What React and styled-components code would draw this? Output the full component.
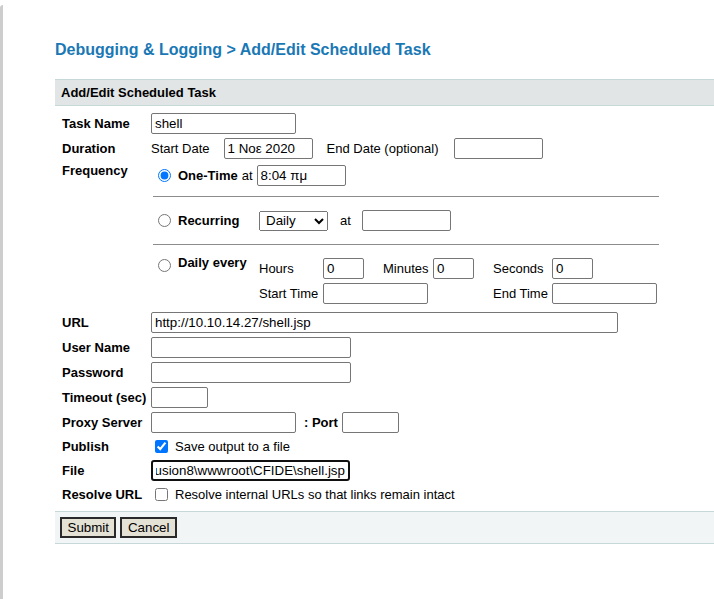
import React, { useEffect, useRef } from 'react';
import styled, { createGlobalStyle } from 'styled-components';

const GlobalStyle = createGlobalStyle`
    html, body {
        margin: 0;
        padding: 0;
        background: #ffffff;
        overflow: hidden;
    }
    body {
        font-family: "Liberation Sans", Arial, sans-serif;
        font-size: 13px;
        color: #000000;
    }
`;

const Frame = styled.div`
    margin-top: 5px;
    min-height: calc(100vh - 5px);
    border-left: 3px solid #cdcdcd;
    border-top-left-radius: 3px;
    padding: 35px 0 0 52px;
    box-sizing: border-box;
`;

const Title = styled.h1`
    margin: 0 0 20px;
    font-size: 16px;
    line-height: 19px;
    font-weight: bold;
    color: #1a78b5;
`;

const Band = styled.div`
    display: flex;
    align-items: center;
    border-top: 1px solid #c6d8d8;
    border-bottom: 1px solid #c6d8d8;
    background: ${({ $footer }) => ($footer ? '#f1f5f5' : '#e1e5e5')};
    padding: ${({ $footer }) => ($footer ? '5px 5px' : '0 6px')};
    height: ${({ $footer }) => ($footer ? '21px' : '25px')};
    font-weight: bold;
    gap: 4px;
`;

const Form = styled.div`
    display: grid;
    grid-template-columns: 89px 1fr;
    row-gap: 4px;
    align-items: center;
    padding: 7px 0 7px 7px;
`;

const Label = styled.div`
    font-weight: bold;
    line-height: 15px;
    align-self: ${({ $top }) => ($top ? 'start' : 'center')};
`;

const Field = styled.div`
    display: flex;
    align-items: center;
    min-height: ${({ $h }) => $h || 21}px;
`;

const Text = styled.span`
    line-height: 15px;
    margin: 0 ${({ $mr }) => $mr || 0}px 0 ${({ $ml }) => $ml || 0}px;
    font-weight: ${({ $bold }) => ($bold ? 'bold' : 'normal')};
    white-space: nowrap;
`;

const TextInput = styled.input`
    box-sizing: border-box;
    width: ${({ $w }) => $w}px;
    height: 21px;
    margin: 0 0 0 ${({ $ml }) => $ml || 0}px;
    padding: 1px 3px;
    border: ${({ $focused }) => ($focused ? '2px solid #101010' : '1px solid #767676')};
    border-radius: ${({ $focused }) => ($focused ? '3px' : '2px')};
    font-family: "Liberation Sans", Arial, sans-serif;
    font-size: 13.33px;
    color: #000000;
    background: #ffffff;
    outline: none;
`;

const SelectBox = styled.select`
    box-sizing: border-box;
    width: 69px;
    height: 20px;
    margin: 0;
    padding: 0 2px;
    font-family: "Liberation Sans", Arial, sans-serif;
    font-size: 13.33px;
    color: #000000;
`;

const Radio = styled.input.attrs({ type: 'radio' })`
    width: 13px;
    height: 13px;
    margin: ${({ $mt }) => $mt || 0}px 7px 0;
    flex-shrink: 0;
`;

const Check = styled.input.attrs({ type: 'checkbox' })`
    width: 13px;
    height: 13px;
    margin: 0 7px 0 4px;
    flex-shrink: 0;
`;

const FreqBlock = styled.div`
    display: flex;
    flex-direction: column;
    padding-bottom: 4px;
`;

const OptionRow = styled.div`
    display: flex;
    align-items: ${({ $start }) => ($start ? 'flex-start' : 'center')};
    min-height: ${({ $h }) => $h || 21}px;
`;

const OptionLabel = styled.div`
    display: flex;
    align-items: ${({ $start }) => ($start ? 'flex-start' : 'center')};
    width: 108px;
    flex-shrink: 0;

    ${Text} {
        margin-top: ${({ $start }) => ($start ? '-3px' : '0')};
    }
`;

const Divider = styled.div`
    width: 506px;
    margin: ${({ $mt }) => $mt}px 0 ${({ $mb }) => $mb}px 2px;
    border-top: 1px solid #8c8c8c;
`;

const TimeGrid = styled.div`
    display: grid;
    grid-template-columns: 64px 60px 50px 60px 59px auto;
    grid-auto-rows: 21px;
    row-gap: 4px;
    align-items: center;
`;

const Wide = styled.div`
    grid-column: span 3;
    display: flex;
`;

const Button = styled.button`
    height: 21px;
    padding: 0 5.5px;
    border: 2px solid #2a2a2a;
    border-radius: 0;
    background: #e4e1d5;
    font-family: "Liberation Sans", Arial, sans-serif;
    font-size: 13.33px;
    color: #000000;
`;

export default function App() {
    const fileRef = useRef(null);

    useEffect(() => {
        if (fileRef.current) {
            fileRef.current.scrollLeft = fileRef.current.scrollWidth;
        }
    }, []);

    return (
        <>
            <GlobalStyle />
            <Frame>
                <Title>Debugging &amp; Logging &gt; Add/Edit Scheduled Task</Title>
                <Band>Add/Edit Scheduled Task</Band>
                <Form>
                    <Label>Task Name</Label>
                    <Field>
                        <TextInput $w={145} defaultValue="shell" />
                    </Field>

                    <Label>Duration</Label>
                    <Field>
                        <Text>Start Date</Text>
                        <TextInput $w={89} $ml={14} defaultValue="1 Νοε 2020" />
                        <Text $ml={14}>End Date (optional)</Text>
                        <TextInput $w={89} $ml={15} />
                    </Field>

                    <Label $top>Frequency</Label>
                    <FreqBlock>
                        <OptionRow $h={24}>
                            <Radio name="freq" defaultChecked />
                            <Text $bold>One-Time</Text>
                            <Text $ml={4} $mr={4}>at</Text>
                            <TextInput $w={89} defaultValue="8:04 πμ" />
                        </OptionRow>
                        <Divider $mt={9} $mb={13} />
                        <OptionRow>
                            <OptionLabel>
                                <Radio name="freq" />
                                <Text $bold>Recurring</Text>
                            </OptionLabel>
                            <SelectBox defaultValue="Daily">
                                <option>Daily</option>
                                <option>Weekly</option>
                                <option>Monthly</option>
                            </SelectBox>
                            <Text $ml={12}>at</Text>
                            <TextInput $w={89} $ml={11} />
                        </OptionRow>
                        <Divider $mt={13} $mb={13} />
                        <OptionRow $start>
                            <OptionLabel $start>
                                <Radio name="freq" $mt={1} />
                                <Text $bold>Daily every</Text>
                            </OptionLabel>
                            <TimeGrid>
                                <Text>Hours</Text>
                                <TextInput $w={41} defaultValue="0" />
                                <Text>Minutes</Text>
                                <TextInput $w={41} defaultValue="0" />
                                <Text>Seconds</Text>
                                <TextInput $w={41} defaultValue="0" />
                                <Text>Start Time</Text>
                                <Wide>
                                    <TextInput $w={105} />
                                </Wide>
                                <Text>End Time</Text>
                                <TextInput $w={105} />
                            </TimeGrid>
                        </OptionRow>
                    </FreqBlock>

                    <Label>URL</Label>
                    <Field>
                        <TextInput $w={467} defaultValue="http://10.10.14.27/shell.jsp" />
                    </Field>

                    <Label>User Name</Label>
                    <Field>
                        <TextInput $w={200} />
                    </Field>

                    <Label>Password</Label>
                    <Field>
                        <TextInput $w={200} type="password" />
                    </Field>

                    <Label>Timeout (sec)</Label>
                    <Field>
                        <TextInput $w={57} />
                    </Field>

                    <Label>Proxy Server</Label>
                    <Field>
                        <TextInput $w={145} />
                        <Text $bold $ml={8}>: Port</Text>
                        <TextInput $w={57} $ml={4} />
                    </Field>

                    <Label>Publish</Label>
                    <Field $h={19}>
                        <Check defaultChecked />
                        <Text>Save output to a file</Text>
                    </Field>

                    <Label>File</Label>
                    <Field>
                        <TextInput
                            ref={fileRef}
                            $w={199}
                            $focused
                            defaultValue="C:\ColdFusion8\wwwroot\CFIDE\shell.jsp"
                        />
                    </Field>

                    <Label>Resolve URL</Label>
                    <Field $h={19}>
                        <Check />
                        <Text>Resolve internal URLs so that links remain intact</Text>
                    </Field>
                </Form>
                <Band $footer>
                    <Button type="button">Submit</Button>
                    <Button type="button">Cancel</Button>
                </Band>
            </Frame>
        </>
    );
}
